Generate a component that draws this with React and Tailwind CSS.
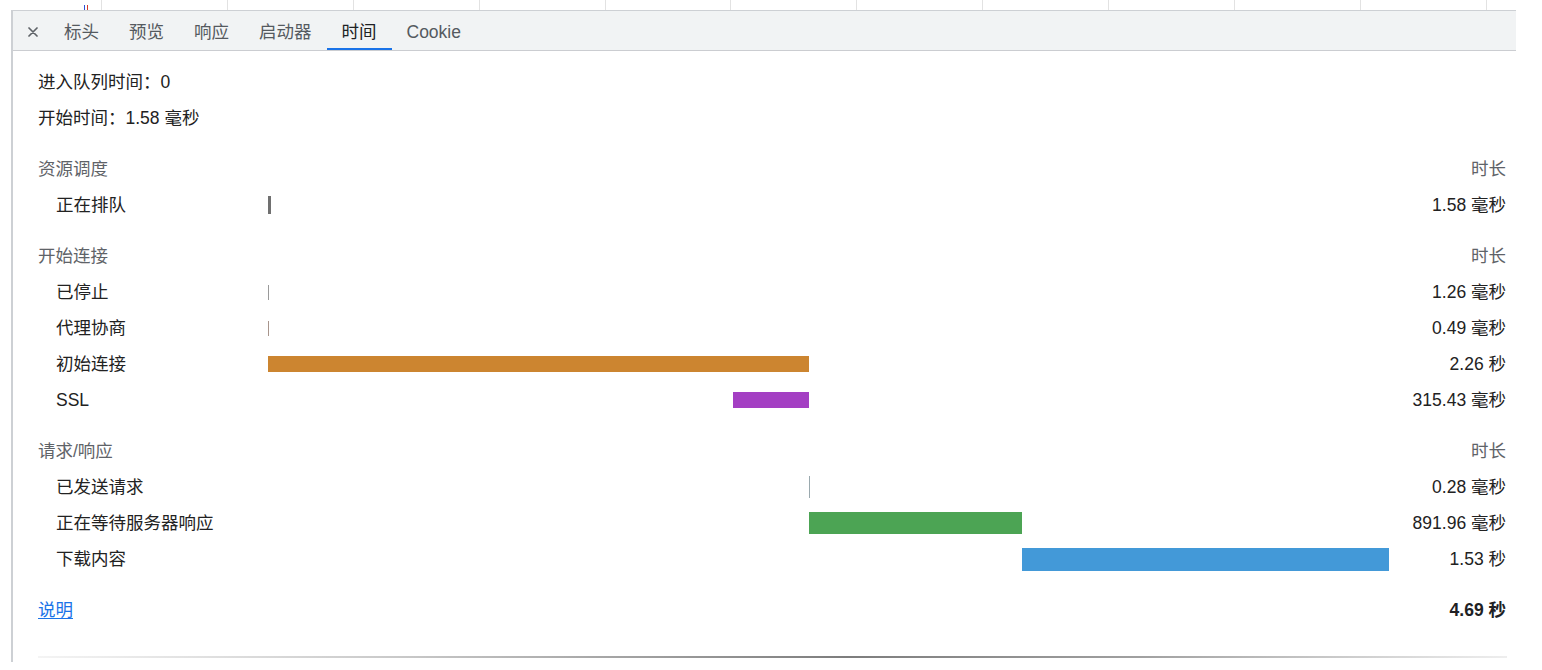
import React from "react";

const FONT = { fontFamily: '"Liberation Sans", "Noto Sans CJK SC", sans-serif' };

const sections = [
  {
    title: "资源调度",
    rows: [
      { label: "正在排队", left: 0, width: 3, h: 18, color: "#707070", value: "1.58 毫秒" },
    ],
  },
  {
    title: "开始连接",
    rows: [
      { label: "已停止", left: 0, width: 1, h: 15, color: "#9a9a9a", value: "1.26 毫秒" },
      { label: "代理协商", left: 0, width: 1, h: 15, color: "#a8958c", value: "0.49 毫秒" },
      { label: "初始连接", left: 0, width: 541, h: 16, color: "#cc8530", value: "2.26 秒" },
      { label: "SSL", left: 465, width: 76, h: 16, color: "#a43fc3", value: "315.43 毫秒" },
    ],
  },
  {
    title: "请求/响应",
    rows: [
      { label: "已发送请求", left: 541, width: 1, h: 22, color: "#9aa9ae", value: "0.28 毫秒" },
      { label: "正在等待服务器响应", left: 541, width: 213, h: 22, color: "#4ca454", value: "891.96 毫秒" },
      { label: "下载内容", left: 754, width: 367, h: 23, color: "#4399d8", value: "1.53 秒" },
    ],
  },
];

const tabs = ["标头", "预览", "响应", "启动器", "时间", "Cookie"];
const ticks = Array.from({ length: 12 }, (_, i) => i);

export default function App() {
  return (
    <div className="w-[1542px] h-[670px] bg-white overflow-hidden text-[17.5px] text-[#222]" style={FONT}>
      {/* top strip with gridline ticks */}
      <div className="flex h-[10px] overflow-hidden">
        <div className="w-[101px] shrink-0 flex items-end">
          <div className="ml-[84px] w-px h-[5px] bg-[#2b4fd6]" />
          <div className="ml-[2px] w-px h-[5px] bg-[#d63a2b]" />
        </div>
        {ticks.map((t) => (
          <div key={t} className="w-[125.9px] h-[10px] border-l border-[#e2e2e2] shrink-0" />
        ))}
      </div>

      {/* panel */}
      <div className="ml-[11px] w-[1505px] h-[652px] border-l-2 border-t border-[#cdd0d4] flex flex-col">
        {/* tab bar */}
        <div className="h-[40px] bg-[#f1f3f4] border-b border-[#cbcdd1] flex items-stretch">
          <div className="w-[36px] flex items-center justify-end pr-[11px] pt-[3px]">
            <svg width="10" height="10" viewBox="0 0 10 10">
              <path d="M1 1 L9 9 M9 1 L1 9" stroke="#5f6368" strokeWidth="1.7" strokeLinecap="round" />
            </svg>
          </div>
          {tabs.map((t) => {
            const active = t === "时间";
            return (
              <div
                key={t}
                className={
                  active
                    ? "px-[15px] flex items-center border-b-2 border-[#1a73e8] text-[#202124] pt-[5px]"
                    : "px-[15px] flex items-center border-b-2 border-transparent text-[#555a5f] pt-[5px]"
                }
              >
                {t}
              </div>
            );
          })}
        </div>

        {/* content */}
        <div className="pl-[25px] pr-[10px] pt-[13px]">
          <div className="h-[36px] flex items-center">进入队列时间：0</div>
          <div className="h-[36px] flex items-center">开始时间：1.58 毫秒</div>

          {sections.map((s) => (
            <div key={s.title} className="mt-[15px]">
              <div className="h-[36px] flex items-center justify-between text-[#5f6368]">
                <span>{s.title}</span>
                <span>时长</span>
              </div>
              {s.rows.map((r) => (
                <div key={r.label} className="h-[36px] grid grid-cols-[230px_1fr_117px] items-center">
                  <div className="pl-[18px] text-[#222]">{r.label}</div>
                  <div className="h-full flex items-center">
                    <div
                      className="shrink-0"
                      style={{ marginLeft: r.left, width: r.width, height: r.h, background: r.color }}
                    />
                  </div>
                  <div className="text-right text-[#222]">{r.value}</div>
                </div>
              ))}
            </div>
          ))}

          <div className="mt-[15px] h-[36px] flex items-center justify-between">
            <a href="#" className="text-[#1a73e8] underline underline-offset-2">说明</a>
            <span className="font-bold text-[#202124]">4.69 秒</span>
          </div>

          <div className="mt-[28px] h-[2px] w-[1469px] bg-[linear-gradient(to_right,#f4f4f4,#c8c8c8_25%,#7d7d7d_55%,#a0a0a0_75%,#eeeeee)]" />
        </div>
      </div>
    </div>
  );
}
